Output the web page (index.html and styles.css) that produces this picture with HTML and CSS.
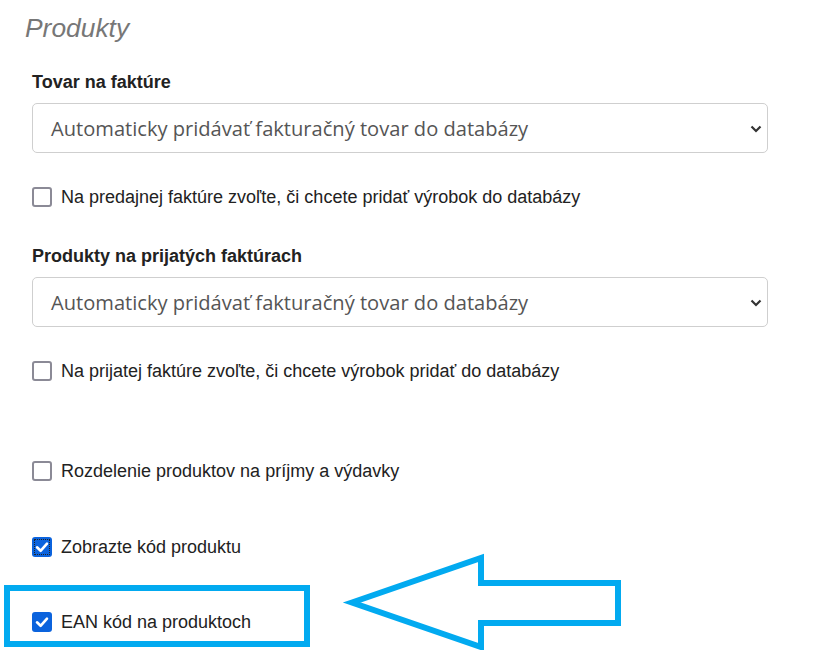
FILE: index.html
```html
<!DOCTYPE html>
<html lang="sk">
<head>
<meta charset="utf-8">
<title>Produkty</title>
<link rel="stylesheet" href="styles.css">
</head>
<body>
<div class="page">
  <h2 class="title">Produkty</h2>
  <div class="form">
    <div class="field">
      <div class="label">Tovar na faktúre</div>
      <div class="select">
        <span class="select-text">Automaticky pridávať fakturačný tovar do databázy</span>
        <svg class="chev" width="12" height="8" viewBox="0 0 12 8"><path d="M1.5 1.5 L6 6 L10.5 1.5" fill="none" stroke="#333" stroke-width="2.2"/></svg>
      </div>
      <div class="check row-a"><span class="box"></span><span>Na predajnej faktúre zvoľte, či chcete pridať výrobok do databázy</span></div>
    </div>
    <div class="field field-b">
      <div class="label">Produkty na prijatých faktúrach</div>
      <div class="select">
        <span class="select-text">Automaticky pridávať fakturačný tovar do databázy</span>
        <svg class="chev" width="12" height="8" viewBox="0 0 12 8"><path d="M1.5 1.5 L6 6 L10.5 1.5" fill="none" stroke="#333" stroke-width="2.2"/></svg>
      </div>
      <div class="check row-a"><span class="box"></span><span>Na prijatej faktúre zvoľte, či chcete výrobok pridať do databázy</span></div>
    </div>
    <div class="check row-c"><span class="box"></span><span>Rozdelenie produktov na príjmy a výdavky</span></div>
    <div class="check row-d"><span class="box on focus"><svg width="20" height="20" viewBox="0 0 20 20"><path d="M5 10.3 L8.6 13.8 L15 6.6" fill="none" stroke="#fff" stroke-width="2.6" stroke-linecap="round" stroke-linejoin="round"/></svg></span><span>Zobrazte kód produktu</span></div>
    <div class="check row-e"><span class="box on"><svg width="20" height="20" viewBox="0 0 20 20"><path d="M5 10.3 L8.6 13.8 L15 6.6" fill="none" stroke="#fff" stroke-width="2.6" stroke-linecap="round" stroke-linejoin="round"/></svg></span><span>EAN kód na produktoch</span></div>
  </div>
  <div class="highlight"></div>
  <svg class="arrow" width="300" height="110" viewBox="340 545 300 110"><polygon points="352,602.5 481,558 481,583 618,583 618,623 481,623 481,647" fill="none" stroke="#02aaf0" stroke-width="6" stroke-linejoin="miter"/></svg>
</div>
</body>
</html>
```
FILE: styles.css
```css
html, body {
  margin: 0;
  padding: 0;
  background: #fff;
}
body {
  font-family: "Liberation Sans", Arial, sans-serif;
  color: #222;
  width: 817px;
  height: 650px;
  overflow: hidden;
}
.page {
  position: relative;
  height: 650px;
}
.title {
  margin: 0;
  padding: 13px 0 0 25px;
  font-size: 26.4px;
  line-height: 30px;
  font-style: italic;
  font-weight: normal;
  color: #777;
}
.form {
  padding: 0 49px 0 32px;
}
.field {
  margin-top: 29px;
}
.field-b {
  margin-top: 37px;
}
.label {
  font-size: 18px;
  font-weight: bold;
  line-height: 20px;
  color: #222;
  margin-bottom: 11px;
}
.select {
  height: 50px;
  box-sizing: border-box;
  border: 1px solid #cfcfcf;
  border-radius: 5px;
  display: flex;
  align-items: center;
  justify-content: space-between;
  padding: 0 5px 0 18px;
}
.select-text {
  font-family: "Open Sans", sans-serif;
  font-size: 20.1px;
  color: #555;
}
.chev {
  margin-top: 1px;
}
.check {
  display: flex;
  align-items: center;
  gap: 9px;
  height: 24px;
  font-size: 18px;
  color: #222;
}
.row-a {
  margin-top: 32px;
}
.row-c {
  margin-top: 76px;
}
.row-d {
  margin-top: 52px;
}
.row-e {
  margin-top: 51px;
}
.box {
  width: 20px;
  height: 20px;
  box-sizing: border-box;
  border: 2px solid #8b8a96;
  border-radius: 3px;
  flex: none;
  position: relative;
}
.box.on {
  border: none;
  background: #0b63dd;
}
.box.on svg {
  display: block;
}
.box.focus {
  outline: 1px dotted #222;
  outline-offset: -3px;
}
.highlight {
  position: absolute;
  left: 4px;
  top: 585px;
  width: 306px;
  height: 62px;
  box-sizing: border-box;
  border: 6px solid #02aaf0;
}
.arrow {
  position: absolute;
  left: 340px;
  top: 545px;
}
```
